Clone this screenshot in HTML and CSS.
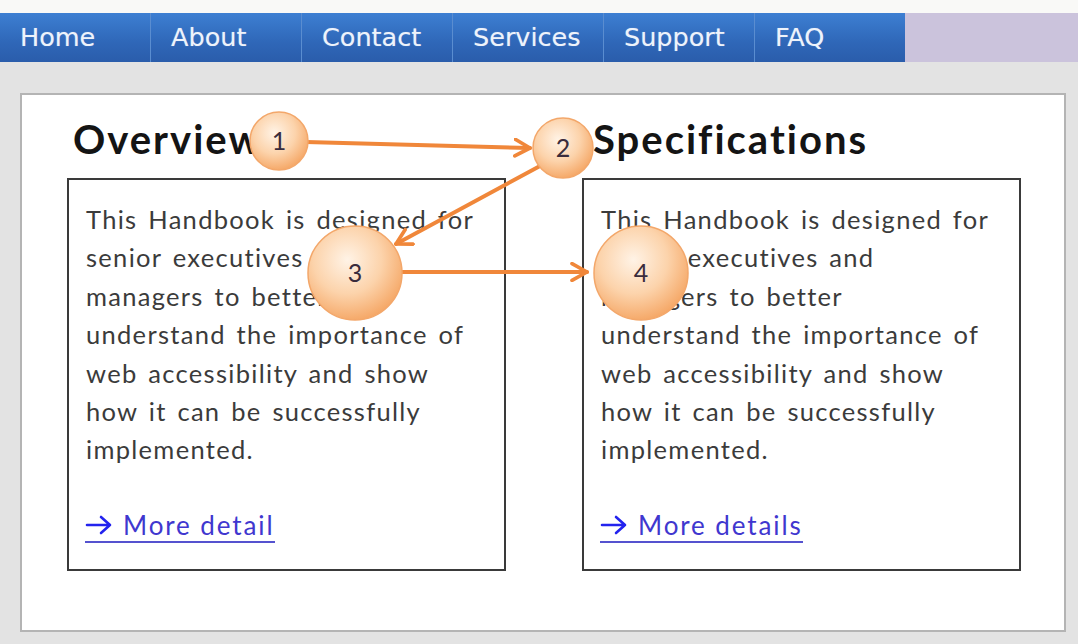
FILE: index.html
```html
<!DOCTYPE html>
<html lang="en">
<head>
<meta charset="utf-8">
<title>Handbook</title>
<link rel="stylesheet" href="styles.css">
</head>
<body>
<div class="page">
  <div class="topstrip"></div>
  <nav class="nav">
    <ul class="menu">
      <li class="item">Home</li>
      <li class="item">About</li>
      <li class="item">Contact</li>
      <li class="item">Services</li>
      <li class="item">Support</li>
      <li class="item item-last">FAQ</li>
    </ul>
    <div class="nav-fill"></div>
  </nav>
  <main class="panel">
    <section class="col">
      <h2 class="heading">Overview</h2>
      <div class="box">
        <p class="text">This Handbook is designed for<br>senior executives and<br>managers to better<br>understand the importance of<br>web accessibility and show<br>how it can be successfully<br>implemented.</p>
        <a class="more" href="#"><svg class="arrow" width="28" height="20" viewBox="0 0 28 20"><path d="M2 10 H25 M16 2 L25 10 L16 18" fill="none" stroke="#2323ee" stroke-width="2.6" stroke-linecap="round" stroke-linejoin="round"/></svg><span class="more-text">More detail</span></a>
      </div>
    </section>
    <section class="col">
      <h2 class="heading heading-right">Specifications</h2>
      <div class="box">
        <p class="text">This Handbook is designed for<br>senior executives and<br>managers to better<br>understand the importance of<br>web accessibility and show<br>how it can be successfully<br>implemented.</p>
        <a class="more" href="#"><svg class="arrow" width="28" height="20" viewBox="0 0 28 20"><path d="M2 10 H25 M16 2 L25 10 L16 18" fill="none" stroke="#2323ee" stroke-width="2.6" stroke-linecap="round" stroke-linejoin="round"/></svg><span class="more-text">More details</span></a>
      </div>
    </section>
  </main>
  <svg class="overlay" width="1078" height="644" viewBox="0 0 1078 644">
    <defs>
      <radialGradient id="bub" cx="0.42" cy="0.36" r="0.66">
        <stop offset="0" stop-color="#fff3e6"/>
        <stop offset="0.55" stop-color="#fcd3ab"/>
        <stop offset="1" stop-color="#f5a766"/>
      </radialGradient>
      <marker id="ah" viewBox="0 0 12 12" refX="10" refY="6" markerWidth="5" markerHeight="5" orient="auto">
        <path d="M1 1 L10 6 L1 11" fill="none" stroke="#f0873a" stroke-width="2.2" stroke-linecap="round" stroke-linejoin="round"/>
      </marker>
    </defs>
    <g stroke="#f0873a" stroke-width="4" stroke-linecap="round" fill="none">
      <line x1="306" y1="142" x2="530" y2="148" marker-end="url(#ah)"/>
      <line x1="540" y1="166" x2="396" y2="244" marker-end="url(#ah)"/>
      <line x1="402" y1="272" x2="587" y2="272" marker-end="url(#ah)"/>
    </g>
    <g>
      <circle cx="279" cy="141" r="29" fill="url(#bub)" stroke="#f3a76a" stroke-width="1.5"/>
      <circle cx="563" cy="148" r="30" fill="url(#bub)" stroke="#f3a76a" stroke-width="1.5"/>
      <circle cx="355" cy="273" r="47" fill="url(#bub)" stroke="#f3a76a" stroke-width="1.5"/>
      <circle cx="641" cy="273" r="47" fill="url(#bub)" stroke="#f3a76a" stroke-width="1.5"/>
    </g>
    <g class="nums">
      <text x="279" y="150" text-anchor="middle">1</text>
      <text x="563" y="157" text-anchor="middle">2</text>
      <text x="355" y="282" text-anchor="middle">3</text>
      <text x="641" y="282" text-anchor="middle">4</text>
    </g>
  </svg>
</div>
</body>
</html>
```
FILE: styles.css
```css
html, body {
  margin: 0;
  padding: 0;
}
body {
  width: 1078px;
  height: 644px;
  overflow: hidden;
  background: #e3e3e3;
  font-family: "Lato", "Liberation Sans", sans-serif;
}
.page {
  position: relative;
  width: 1078px;
  height: 644px;
  display: flex;
  flex-direction: column;
}
.topstrip {
  height: 13px;
  background: #f9f9f7;
}
.nav {
  display: flex;
  height: 49px;
}
.menu {
  list-style: none;
  margin: 0;
  padding: 0;
  display: flex;
  width: 905px;
  background: linear-gradient(#3d7fd2, #2f67b8 60%, #2a5dab);
}
.item {
  width: 151px;
  box-sizing: border-box;
  padding-left: 20px;
  border-right: 1px solid #5a8dd0;
  color: #eef3fb;
  font-family: "DejaVu Sans", "Verdana", sans-serif;
  font-size: 25.5px;
  line-height: 48px;
  text-shadow: 0 0 1px rgba(255,255,255,0.4);
}
.item-last {
  border-right: none;
  flex: 1;
}
.nav-fill {
  flex: 1;
  background: #cbc3dc;
}
.panel {
  margin: 31px 12px 0 20px;
  height: 539px;
  box-sizing: border-box;
  background: #fff;
  border: 2px solid #b4b4b4;
  display: grid;
  grid-template-columns: 439px 439px;
  grid-template-rows: 476px;
  column-gap: 76px;
  padding: 0 0 0 45px;
}
.col {
  display: flex;
  flex-direction: column;
}
.heading {
  margin: 0;
  padding: 20px 0 0 6px;
  height: 83px;
  box-sizing: border-box;
  font-size: 40px;
  line-height: 48px;
  letter-spacing: 2px;
  font-weight: 700;
  color: #141414;
}
.heading-right {
  padding-left: 11px;
}
.box {
  height: 393px;
  box-sizing: border-box;
  border: 2px solid #3a3a3a;
  padding: 20px 8px 0 17px;
  display: flex;
  flex-direction: column;
}
.text {
  margin: 0;
  font-size: 25.5px;
  line-height: 38.4px;
  letter-spacing: 1.3px;
  word-spacing: 3px;
  white-space: nowrap;
  color: #3b3b3b;
}
.more {
  margin-top: 40px;
  margin-left: -1px;
  align-self: flex-start;
  display: flex;
  align-items: center;
  gap: 10px;
  height: 32px;
  border-bottom: 2.5px solid #5552cf;
  text-decoration: none;
}
.more-text {
  font-size: 26px;
  line-height: 32px;
  letter-spacing: 1.9px;
  color: #4037cf;
}
.arrow {
  display: block;
  flex: none;
}
.overlay {
  position: absolute;
  left: 0;
  top: 0;
}
.nums text {
  font-family: "Lato", "Liberation Sans", sans-serif;
  font-size: 25px;
  fill: #3a2c3c;
}
```
